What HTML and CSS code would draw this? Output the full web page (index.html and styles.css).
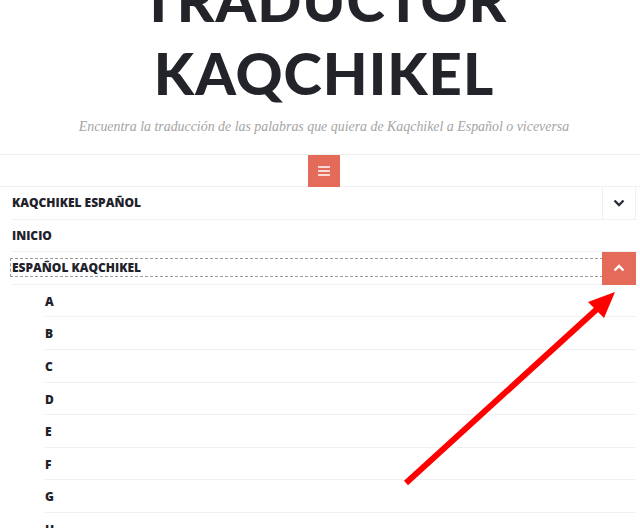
FILE: index.html
```html
<!DOCTYPE html>
<html lang="es">
<head>
<meta charset="utf-8">
<title>Traductor Kaqchikel</title>
<link rel="stylesheet" href="styles.css">
</head>
<body>
<div class="page">
  <header class="site-header">
    <h1 class="site-title">TRADUCTOR<br>KAQCHIKEL</h1>
    <p class="tagline">Encuentra la traducción de las palabras que quiera de Kaqchikel a Español o viceversa</p>
  </header>
  <div class="nav-bar">
    <button class="menu-toggle" aria-label="Menú">
      <svg width="12" height="10" viewBox="0 0 12 10"><path d="M0 1h12M0 5h12M0 9h12" stroke="#fff" stroke-width="1.6"/></svg>
    </button>
  </div>
  <nav class="menu">
    <ul class="menu-list">
      <li class="item">
        <a class="link">KAQCHIKEL ESPAÑOL</a>
        <span class="toggle">
          <svg width="12" height="8" viewBox="0 0 12 8"><path d="M1.5 1.5L6 6l4.5-4.5" fill="none" stroke="#2b2f3a" stroke-width="2.4"/></svg>
        </span>
      </li>
      <li class="item"><a class="link">INICIO</a></li>
      <li class="item open">
        <a class="link focus">ESPAÑOL KAQCHIKEL</a>
        <span class="toggle active">
          <svg width="12" height="8" viewBox="0 0 12 8"><path d="M1.5 6.5L6 2l4.5 4.5" fill="none" stroke="#fff" stroke-width="2.4"/></svg>
        </span>
      </li>
    </ul>
    <ul class="sub-list">
      <li class="sub-item">A</li>
      <li class="sub-item">B</li>
      <li class="sub-item">C</li>
      <li class="sub-item">D</li>
      <li class="sub-item">E</li>
      <li class="sub-item">F</li>
      <li class="sub-item">G</li>
      <li class="sub-item">H</li>
    </ul>
  </nav>
  <svg class="arrow" width="640" height="528" viewBox="0 0 640 528">
    <line x1="406" y1="483" x2="597" y2="309" stroke="#ff0000" stroke-width="6"/>
    <polygon points="615,292 588,302 604,318" fill="#ff0000"/>
  </svg>
</div>
</body>
</html>
```
FILE: styles.css
```css
html, body {
  margin: 0;
  padding: 0;
  background: #fff;
  overflow: hidden;
}
.page {
  position: relative;
  width: 640px;
  height: 528px;
  overflow: hidden;
}
.site-header {
  padding-left: 8px;
  text-align: center;
}
.site-title {
  margin: -37px 0 0;
  font-family: Lato, "Open Sans", sans-serif;
  font-weight: 900;
  font-size: 58px;
  line-height: 73px;
  color: #222429;
  letter-spacing: 1px;
}
.tagline {
  margin: 10px 0 0;
  font-family: "Liberation Serif", serif;
  font-style: italic;
  font-size: 13.9px;
  color: #a5a5a5;
  line-height: 16px;
}
.nav-bar {
  margin-top: 19px;
  height: 31px;
  border-top: 1px solid #f0f0f0;
  border-bottom: 1px solid #f0f0f0;
  display: flex;
  justify-content: center;
  padding-left: 8px;
}
.menu-toggle {
  width: 32px;
  height: 32px;
  border: 0;
  padding: 0;
  background: #e46a5a;
  display: flex;
  align-items: center;
  justify-content: center;
}
.menu {
  margin: 0 4px 0 12px;
}
.menu-list, .sub-list {
  list-style: none;
  margin: 0;
  padding: 0;
}
.item {
  position: relative;
  display: flex;
  align-items: center;
  height: 31.6px;
  border-bottom: 1px solid #f0f0f0;
  font-family: "Open Sans", sans-serif;
  font-weight: 800;
  font-size: 12px;
  color: #1f222a;
}
.link {
  flex: 1;
  line-height: 16px;
  padding-top: 1px;
}
.link.focus {
  outline: 1px dashed #9a9a9a;
  margin-left: -1px;
  padding-left: 1px;
}
.toggle {
  width: 32px;
  height: 32px;
  border-left: 1px solid #f0f0f0;
  border-right: 1px solid #f0f0f0;
  display: flex;
  align-items: center;
  justify-content: center;
  align-self: flex-start;
}
.toggle.active {
  background: #e46a5a;
  border-color: #e46a5a;
  height: 32.6px;
}
.sub-list {
  margin-left: 33px;
}
.sub-item {
  height: 31.6px;
  line-height: 33px;
  border-bottom: 1px solid #f0f0f0;
  font-family: "Open Sans", sans-serif;
  font-weight: 800;
  font-size: 12px;
  color: #1f222a;
}
.arrow {
  position: absolute;
  left: 0;
  top: 0;
  pointer-events: none;
}
```
